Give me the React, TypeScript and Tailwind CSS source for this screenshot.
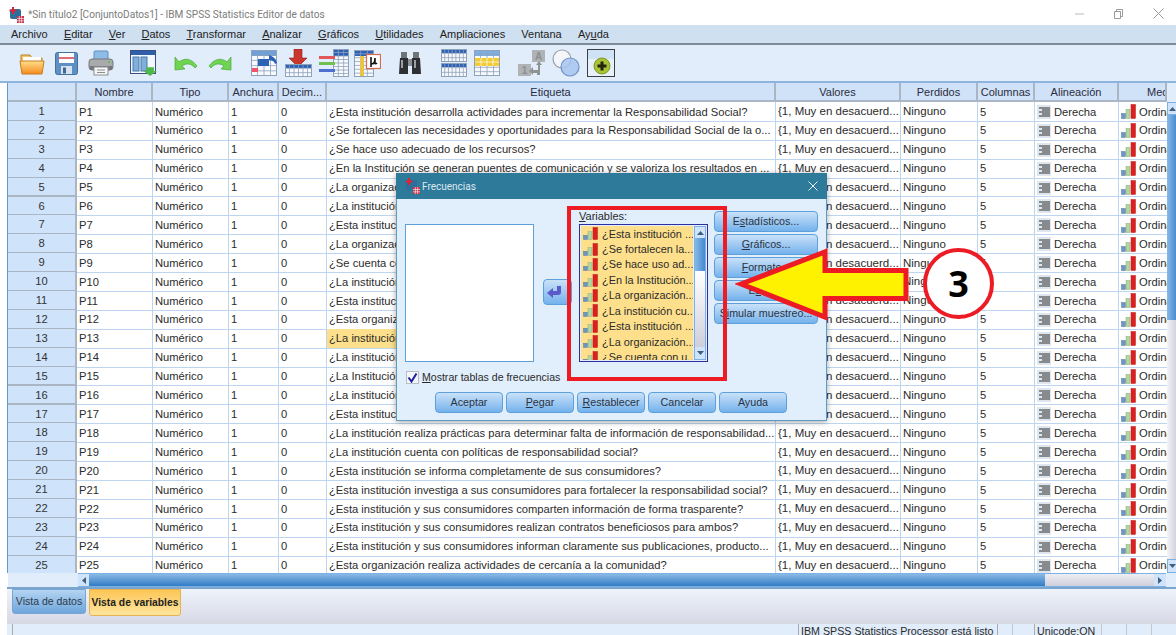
import React from 'react';

const labels = [
  '¿Esta institución desarrolla actividades para incrementar la Responsabilidad Social?',
  '¿Se fortalecen las necesidades y oportunidades para la Responsabilidad Social de la o...',
  '¿Se hace uso adecuado de los recursos?',
  '¿En la Institución se generan puentes de comunicación y se valoriza los resultados en ...',
  '¿La organización cumple con sus compromisos?',
  '¿La institución cuenta con programas sociales?',
  '¿Esta institución promueve la participación?',
  '¿La organización informa sobre sus acciones?',
  '¿Se cuenta con un código de ética?',
  '¿La institución evalúa sus resultados?',
  '¿Esta institución apoya a la comunidad?',
  '¿Esta organización capacita a su personal?',
  '¿La institución respeta a sus trabajadores?',
  '¿La institución protege el medio ambiente?',
  '¿La Institución fomenta el diálogo?',
  '¿La institución difunde sus políticas?',
  '¿Esta institución rinde cuentas?',
  '¿La institución realiza prácticas para determinar falta de información de responsabilidad...',
  '¿La institución cuenta con políticas de responsabilidad social?',
  '¿Esta institución se informa completamente de sus consumidores?',
  '¿Esta institución investiga a sus consumidores para fortalecer la responsabilidad social?',
  '¿Esta institución y sus consumidores comparten información de forma trasparente?',
  '¿Esta institución y sus consumidores realizan contratos beneficiosos para ambos?',
  '¿Esta institución y sus consumidores informan claramente sus publicaciones, producto...',
  '¿Esta organización realiza actividades de cercanía a la comunidad?',
];

const pickList = [
  '¿Esta institución ...',
  '¿Se fortalecen la...',
  '¿Se hace uso ad...',
  '¿En la Institución...',
  '¿La organización...',
  '¿La institución cu...',
  '¿Esta institución ...',
  '¿La organización...',
  '¿Se cuenta con u...',
];

const gridCols = 'grid grid-cols-[69px_76px_76px_50px_48px_449px_125px_77px_57px_84px_48px]';

const OrdinalIcon = ({ height = 15 }: { height?: number }) => (
  <svg width="15" height={height} viewBox="0 0 15 15" preserveAspectRatio="none" className="shrink-0">
    <rect x="0.5" y="9.5" width="4" height="5" fill="#6d96c8" stroke="#54779f" strokeWidth="0.5" />
    <rect x="5" y="5.5" width="4" height="9" fill="#b4d6a0" stroke="#86a874" strokeWidth="0.5" />
    <rect x="10" y="0.5" width="4.5" height="14" fill="#dc2020" stroke="#b81c1c" strokeWidth="0.5" />
  </svg>
);

const AlignIcon = () => (
  <svg width="14" height="14" viewBox="0 0 14 14" className="shrink-0">
    <rect width="14" height="14" fill="#dfe7ee" />
    <path d="M2 3h11M5 5h8M2 7h11M5 9h8M2 11h11" stroke="#2e2e2e" strokeWidth="1" />
  </svg>
);

const AppIcon = () => (
  <svg width="16" height="16" viewBox="0 0 16 16">
    <rect x="2" y="2" width="11" height="10" rx="2" fill="#2d6f9a" />
    <path d="M5 0v7M1.5 3.5h7" stroke="#d8263a" strokeWidth="2" />
    <rect x="9" y="9" width="7" height="7" fill="#c8324a" />
    <path d="M9 11.5h7M9 13.8h7M11.3 9v7M13.6 9v7" stroke="#fff" strokeWidth="0.6" />
  </svg>
);

const FolderIcon = () => (
  <svg width="26" height="26" viewBox="0 0 26 26" className="ml-[19px]">
    <defs>
      <linearGradient id="folderFill" x1="0" y1="0" x2="0" y2="1">
        <stop offset="0" stopColor="#ffe08a" />
        <stop offset="1" stopColor="#f58a1f" />
      </linearGradient>
    </defs>
    <path d="M2 5h9l2 3h10v5H2z" fill="#f7c766" stroke="#b9812a" />
    <rect x="4" y="7" width="18" height="5" fill="#fff" />
    <path d="M1 11h24l-2 13H3z" fill="url(#folderFill)" stroke="#cc7a1e" />
  </svg>
);

const SaveIcon = () => (
  <svg width="23" height="26" viewBox="0 0 23 26" className="ml-[10px]">
    <rect x="0.5" y="2.5" width="22" height="22" rx="2" fill="#5d8fc4" stroke="#44709e" />
    <rect x="4" y="3" width="15" height="10" fill="#fbfcfd" />
    <path d="M4 8h15" stroke="#d8465a" strokeWidth="1.6" />
    <rect x="6" y="16" width="11" height="8" fill="#d6e2ee" />
    <rect x="8" y="17.5" width="3" height="6" fill="#3f6896" />
  </svg>
);

const PrintIcon = () => (
  <svg width="26" height="26" viewBox="0 0 26 26" className="ml-[10px]">
    <rect x="6" y="1" width="14" height="10" rx="1" fill="#8fbce6" stroke="#5f8fbd" />
    <rect x="1" y="9" width="24" height="11" rx="3" fill="#a8aaac" stroke="#77797c" />
    <rect x="2" y="16" width="22" height="4" fill="#75777a" />
    <rect x="6" y="17" width="14" height="8" fill="#f6f6f6" stroke="#8b8d90" />
    <path d="M9 20h8M9 22.5h8" stroke="#8b8d90" />
    <rect x="20" y="11" width="2" height="2" fill="#6cc04a" />
  </svg>
);

const GotoIcon = () => (
  <svg width="28" height="27" viewBox="0 0 28 27" className="ml-[16px]">
    <rect x="0.5" y="0.5" width="25" height="23" fill="#f4f7fb" stroke="#3b4f85" />
    <rect x="1" y="1" width="24" height="4" fill="#2e5fa8" />
    <rect x="3" y="7" width="6" height="14" fill="#7fb0dc" stroke="#4878a8" />
    <rect x="11" y="7" width="6" height="14" fill="#7fb0dc" stroke="#4878a8" />
    <path d="M18 18h8v4h3l-7 5-7-5h3z" transform="translate(-1 0) scale(0.96)" fill="#4fb848" />
  </svg>
);

const UndoIcon = () => (
  <svg width="24" height="18" viewBox="0 0 24 18" className="ml-[16px]">
    <path d="M1 3v13l10-1-3-3c4-3 9-3 13 2l2-2C18 5 11 3 5 8z" fill="#6fd452" stroke="#4aa838" strokeWidth="0.7" />
  </svg>
);

const RedoIcon = () => (
  <svg width="24" height="18" viewBox="0 0 24 18" className="ml-[10px]">
    <path d="M23 3v13l-10-1 3-3c-4-3-9-3-13 2l-2-2C6 5 13 3 19 8z" fill="#6fd452" stroke="#4aa838" strokeWidth="0.7" />
  </svg>
);

const GridGlyph = ({ rows = 4, cols = 5, w = 26, h = 24, head = '#2b62b5' }: { rows?: number; cols?: number; w?: number; h?: number; head?: string }) => (
  <>
    <rect x="0.5" y="0.5" width={w - 1} height={h - 1} fill="#f7f9fc" stroke="#8ea2bc" />
    <rect x="1" y="1" width={w - 2} height={Math.round(h / 5)} fill={head} />
    {Array.from({ length: rows }, (_, i) => (
      <path key={`r${i}`} d={`M1 ${((i + 1) * h) / (rows + 1)}H${w - 1}`} stroke="#8ea2bc" strokeWidth="0.8" />
    ))}
    {Array.from({ length: cols - 1 }, (_, i) => (
      <path key={`c${i}`} d={`M${((i + 1) * w) / cols} 1V${h - 1}`} stroke="#8ea2bc" strokeWidth="0.8" />
    ))}
  </>
);

const RecallIcon = () => (
  <svg width="26" height="26" viewBox="0 0 26 26" className="ml-[19px]">
    <GridGlyph rows={4} cols={4} h={26} head="#6d9fd8" />
    <rect x="1" y="18" width="6" height="4" fill="#f0536a" />
    <path d="M7 9h11V5c3 1 7 3 8 8l-2 1c-1-3-3-4-6-4v6H7z" fill="#2b62b5" />
  </svg>
);

const InsertCasesIcon = () => (
  <svg width="27" height="28" viewBox="0 0 27 28" className="ml-[8px]">
    <path d="M9 0h8v9h5l-9 9-9-9h5z" fill="#c9362b" stroke="#96241c" strokeWidth="0.6" />
    <g transform="translate(0 15)">
      <GridGlyph rows={2} cols={6} w={27} h={13} head="#2b62b5" />
    </g>
  </svg>
);

const InsertVarIcon = () => (
  <svg width="30" height="28" viewBox="0 0 30 28" className="ml-[7px]">
    <g transform="translate(14 0)">
      <GridGlyph rows={7} cols={3} w={16} h={28} head="#2b62b5" />
    </g>
    <rect x="0" y="7" width="16" height="3" fill="#e2565c" />
    <rect x="0" y="13" width="16" height="3" fill="#6fc04f" />
    <rect x="0" y="20" width="16" height="3" fill="#4d6fd2" />
  </svg>
);

const SplitIcon = () => (
  <svg width="27" height="27" viewBox="0 0 27 27" className="ml-[5px]">
    <g>
      <GridGlyph rows={6} cols={3} w={20} h={27} head="#2b62b5" />
    </g>
    <rect x="6" y="6" width="4" height="20" fill="#e8c548" />
    <rect x="12.5" y="4.5" width="14" height="14" fill="#fff" stroke="#d9694f" strokeWidth="1.2" />
    <path d="M17 7v10M17 13c2 2 4 0 4-5v5c0 1 1 1 2 0" fill="none" stroke="#111" strokeWidth="1.6" />
  </svg>
);

const BinocularsIcon = () => (
  <svg width="24" height="24" viewBox="0 0 24 24" className="ml-[17px]">
    <rect x="3" y="1" width="6" height="6" fill="#6f7478" />
    <rect x="15" y="1" width="6" height="6" fill="#6f7478" />
    <path d="M2 7h8v16H1z" fill="#2d2f33" />
    <path d="M22 7h-8v16h9z" fill="#2d2f33" />
    <rect x="10" y="8" width="4" height="7" fill="#8b9096" />
    <rect x="3" y="9" width="2" height="8" fill="#9aa0a6" />
    <rect x="16" y="9" width="2" height="8" fill="#9aa0a6" />
  </svg>
);

const DoubleGridIcon = () => (
  <svg width="26" height="28" viewBox="0 0 26 28" className="ml-[19px]">
    <GridGlyph rows={2} cols={7} h={13} />
    <g transform="translate(0 14)">
      <GridGlyph rows={2} cols={7} h={14} />
    </g>
  </svg>
);

const YellowGridIcon = () => (
  <svg width="26" height="26" viewBox="0 0 26 26" className="ml-[7px]">
    <GridGlyph rows={5} cols={4} h={26} head="#7eaee4" />
    <rect x="1" y="8" width="24" height="8" fill="#f3cb32" />
    <path d="M7 8v8M13 8v8M19 8v8M1 12h24" stroke="#fff" strokeWidth="0.7" />
  </svg>
);

const ValueLabelIcon = () => (
  <svg width="28" height="28" viewBox="0 0 28 28" className="ml-[18px]">
    <rect x="14" y="1" width="13" height="12" fill="#b0b3b6" />
    <text x="20.5" y="11" textAnchor="middle" fontSize="10" fontWeight="700" fill="#8b8e91" fontFamily="Liberation Sans, sans-serif">A</text>
    <rect x="0" y="15" width="13" height="12" fill="#b0b3b6" />
    <text x="6.5" y="25" textAnchor="middle" fontSize="10" fontWeight="700" fill="#8b8e91" fontFamily="Liberation Sans, sans-serif">1</text>
    <path d="M15 21h5V16h-2l3-4 3 4h-2v10h-3v-2h-4v2l-4-4 4-4z" fill="#8f9396" />
  </svg>
);

const SetsIcon = () => (
  <svg width="28" height="28" viewBox="0 0 28 28" className="ml-[6px]">
    <circle cx="10" cy="10" r="9" fill="#f4f6f9" stroke="#9aa0a8" strokeWidth="1.2" />
    <circle cx="18" cy="18" r="9" fill="#a7c4ef" fillOpacity="0.85" stroke="#6f93c9" strokeWidth="1.2" />
  </svg>
);

const AddOnIcon = () => (
  <svg width="28" height="28" viewBox="0 0 28 28" className="ml-[7px]">
    <rect x="0.5" y="0.5" width="27" height="27" fill="#e8f1fa" stroke="#3c3f44" />
    <rect x="1" y="1" width="26" height="9" fill="#cfe2f6" />
    <circle cx="15" cy="17" r="8" fill="#a8c436" stroke="#7f9a26" />
    <path d="M15 12.5v9M10.5 17h9" stroke="#22260f" strokeWidth="3" />
  </svg>
);

const TitleBar = () => (
  <div className="h-[25px] flex items-center bg-white pl-[8px] pt-[5px]">
    <AppIcon />
    <span className="ml-[4px] text-[#7c7c7c] text-[10.1px] [font-family:'Roboto',sans-serif]">*Sin título2 [ConjuntoDatos1] - IBM SPSS Statistics Editor de datos</span>
    <div className="ml-auto flex items-center gap-[30px] pr-[12px] -mt-[3px]">
      <svg width="9" height="10" viewBox="0 0 9 10"><path d="M0 5h9" stroke="#b9b9b9" /></svg>
      <svg width="9" height="10" viewBox="0 0 9 10"><path d="M.5 2.5h6v7h-6zM2.5 2V.5h6v7H7" fill="none" stroke="#9a9a9a" /></svg>
      <svg width="11" height="11" viewBox="0 0 11 11"><path d="M.5.5l10 10M10.5.5l-10 10" stroke="#9a9a9a" /></svg>
    </div>
  </div>
);

const MenuBar = () => (
  <div className="h-[20px] pt-[1px] bg-[#cfe0f1] border-b-2 border-[#7f8c98] flex items-center pl-[11px] gap-[16.2px] text-[11px] text-[#222]">
    <span>Archivo</span>
    <span><u>E</u>ditar</span>
    <span><u>V</u>er</span>
    <span><u>D</u>atos</span>
    <span><u>T</u>ransformar</span>
    <span><u>A</u>nalizar</span>
    <span><u>G</u>ráficos</span>
    <span><u>U</u>tilidades</span>
    <span>Ampliaciones</span>
    <span>Ventana</span>
    <span>Ay<u>u</u>da</span>
  </div>
);

const Toolbar = () => (
  <div className="h-[38px] bg-[#e1edfb] border-b-2 border-[#8db4dc] flex items-center relative">
    <FolderIcon />
    <SaveIcon />
    <PrintIcon />
    <GotoIcon />
    <UndoIcon />
    <RedoIcon />
    <RecallIcon />
    <InsertCasesIcon />
    <InsertVarIcon />
    <SplitIcon />
    <BinocularsIcon />
    <DoubleGridIcon />
    <YellowGridIcon />
    <ValueLabelIcon />
    <SetsIcon />
    <AddOnIcon />
  </div>
);

const headerCell = 'h-[19px] pt-[1px] bg-[#cfe2f8] border-r-2 border-b-2 border-[#aab6c4] flex items-center justify-center text-[11px] text-[#2c2c40] overflow-hidden whitespace-nowrap';
const bodyCell = 'h-full pt-[1px] border-r border-b border-[#bdd5ee] flex items-center pl-[2px] overflow-hidden whitespace-nowrap';

const HeaderRow = () => (
  <div className={gridCols}>
    {['', 'Nombre', 'Tipo', 'Anchura', 'Decim...', 'Etiqueta', 'Valores', 'Perdidos', 'Columnas', 'Alineación'].map((h, i) => (
      <div key={i} className={headerCell}>{h}</div>
    ))}
    <div className={`${headerCell} justify-start pl-[28px] border-r-0`}>Medida</div>
  </div>
);

const VarRow = ({ n, label }: { n: number; label: string }) => (
  <div className={`${gridCols} h-[18.92px] text-[11.2px] text-[#2b2b2b]`}>
    <div className="h-full pt-[1px] bg-[#cfe3fb] border-r-2 border-b-2 border-[#aab6c4] flex items-center justify-center text-[#333]">{n}</div>
    <div className={bodyCell}>P{n}</div>
    <div className={bodyCell}>Numérico</div>
    <div className={bodyCell}>1</div>
    <div className={bodyCell}>0</div>
    <div className={`${bodyCell} ${n === 13 ? 'bg-[#fde08c]' : ''}`}>{label}</div>
    <div className={`${bodyCell} text-[11.5px]`}>{'{1, Muy en desacuerd...'}</div>
    <div className={`${bodyCell} text-[11.5px]`}>Ninguno</div>
    <div className={bodyCell}>5</div>
    <div className={`${bodyCell} gap-[3px]`}><AlignIcon />Derecha</div>
    <div className={`${bodyCell} gap-[3px] border-r-0`}><OrdinalIcon />Ordinal</div>
  </div>
);

const ArrowUp = () => (
  <svg width="7" height="4" viewBox="0 0 7 4"><path d="M3.5 0L7 4H0z" fill="#3f5f80" /></svg>
);

const ArrowDown = () => (
  <svg width="7" height="4" viewBox="0 0 7 4"><path d="M3.5 4L7 0H0z" fill="#3f5f80" /></svg>
);

const VerticalScroll = () => (
  <div className="w-[10px] shrink-0 flex flex-col">
    <div className="h-[19px] bg-[#e1edfb]" />
    <div className="h-[13px] flex items-center justify-center bg-[#cfe3fb] border border-[#7db1e3]"><ArrowUp /></div>
    <div className="h-[205px] bg-gradient-to-r from-[#8ab9e6] to-[#3f8ad0]" />
    <div className="h-[239px] bg-gradient-to-r from-[#f4f4f8] to-[#cfcfdc]" />
    <div className="h-[14px] flex items-center justify-center bg-[#cfe3fb] border border-[#7db1e3]"><ArrowDown /></div>
  </div>
);

const HorizontalScroll = () => (
  <div className="h-[14px] flex">
    <div className="w-[70px] bg-[#e1edfb]" />
    <div className="flex-1 flex border-y border-[#7db1e3]">
      <div className="w-[11px] bg-[#cfe3fb] flex items-center justify-center">
        <svg width="4" height="7" viewBox="0 0 4 7"><path d="M0 3.5L4 0v7z" fill="#3f5f80" /></svg>
      </div>
      <div className="w-[956px] bg-gradient-to-b from-[#8ab9e6] to-[#2f7cc4]" />
      <div className="flex-1 bg-gradient-to-b from-[#eeeef4] to-[#cfcfdc]" />
      <div className="w-[12px] bg-[#cfe3fb] flex items-center justify-center">
        <svg width="4" height="7" viewBox="0 0 4 7"><path d="M4 3.5L0 0v7z" fill="#3f5f80" /></svg>
      </div>
    </div>
    <div className="w-[10px] bg-[#e1edfb]" />
  </div>
);

const Tabs = () => (
  <div className="h-[35px] ml-[7px] bg-gradient-to-b from-[#edf3fb] to-[#d9d9e7] border-t-2 border-[#7aa5cf] flex items-start pl-[5px] gap-[3px] text-[10.3px]">
    <div className="w-[74px] h-[25px] rounded-b-[3px] bg-gradient-to-b from-[#b4d4f2] to-[#6ea6dc] border border-[#7aa5cf] flex items-center justify-center text-[#2d3a4a] whitespace-nowrap text-[10.5px]">Vista de datos</div>
    <div className="w-[92px] h-[27px] rounded-b-[3px] bg-gradient-to-b from-[#fcc654] to-[#fee49c] border border-[#e3b355] flex items-center justify-center font-bold text-[#222] whitespace-nowrap">Vista de variables</div>
  </div>
);

const StatusBar = () => (
  <div className="h-[13px] ml-[7px] bg-[#e1edfb] border-t-2 border-[#d8d8e2] flex text-[10.7px] text-[#2b2b2b] overflow-hidden">
    <div className="w-[787px] ml-[5px] border-l border-r border-[#a9a9b2]" />
    <div className="w-[199px] border-r border-[#a9a9b2] whitespace-nowrap pl-[2px] leading-[14px]">IBM SPSS Statistics Processor está listo</div>
    <div className="w-[15px] border-r border-[#c5c5cc]" />
    <div className="w-[22px] border-r border-[#a9a9b2]" />
    <div className="w-[67px] border-r border-[#c5c5cc] pl-[2px] leading-[14px] whitespace-nowrap">Unicode:ON</div>
    <div className="w-[25px] border-r border-[#c5c5cc]" />
    <div className="w-[25px] border-r border-[#c5c5cc]" />
  </div>
);

const blueBtn = 'rounded-[4px] border border-[#5ea0dc] bg-gradient-to-b from-[#c9e1f8] to-[#74b2ec] flex items-center justify-center text-[10.7px] text-[#2a3342] whitespace-nowrap';

const PickListPanel = () => (
  <div className="w-[129px] h-[138px] border border-[#2d2fa0] flex bg-[#e1eefb] p-[1px] overflow-hidden">
    <div className="w-[112px] bg-[#fee08c] flex flex-col pl-[2px] overflow-hidden">
      {pickList.map((item, i) => (
        <div key={i} className="h-[15.45px] shrink-0 flex items-center gap-[4px] text-[10.9px] text-[#2b2b2b] whitespace-nowrap">
          <OrdinalIcon height={13} />
          {item}
        </div>
      ))}
    </div>
    <div className="flex-1 ml-[1px] flex flex-col border border-[#7db1e3]">
      <div className="h-[11px] bg-[#cfe3fb] flex items-center justify-center"><ArrowUp /></div>
      <div className="h-[33px] bg-gradient-to-r from-[#8ab9e6] to-[#3f8ad0]" />
      <div className="flex-1 bg-gradient-to-b from-white to-[#cfcfdc]" />
      <div className="h-[12px] bg-[#cfe3fb] flex items-center justify-center"><ArrowDown /></div>
    </div>
  </div>
);

const FrequencyDialog = () => (
  <div className="absolute left-[396px] top-[173px] w-[431px] h-[248px] bg-[#e1eefb] border border-[#5d9cc0] shadow-[0_1px_6px_rgba(0,0,0,0.35)] flex flex-col">
    <div className="h-[26px] shrink-0 -mt-px -mx-px bg-[#2e7a9b] flex items-center pl-[8px] pr-[8px]">
      <AppIcon />
      <span className="ml-[2px] text-[10px] text-[#dce8ef] [font-family:'Roboto',sans-serif]">Frecuencias</span>
      <svg width="10" height="10" viewBox="0 0 10 10" className="ml-auto mr-[1px]"><path d="M.5.5l9 9M9.5.5l-9 9" stroke="#e8f0f4" /></svg>
    </div>
    <div className="flex pt-[12px] pl-[8px]">
      <div className="mt-[13px] w-[129px] h-[138px] bg-white border border-[#5ea0dc]" />
      <button className={`${blueBtn} ml-[9px] mt-[68px] w-[29px] h-[26px]`}>
        <svg width="14" height="12" viewBox="0 0 14 12" className="mr-[8px]"><path d="M0 7l6-5v3h4V0h4v6c0 2-1 3-3 3H6v3z" fill="#5a5ac8" /></svg>
      </button>
      <div className="ml-[7px]">
        <div className="h-[13px] text-[11px] leading-[10px] text-[#2b2b2b]"><u>V</u>ariables:</div>
        <PickListPanel />
      </div>
      <div className="ml-[6px] w-[104px] flex flex-col gap-[2px]">
        <button className={`${blueBtn} h-[21px]`}><span>E<u>s</u>tadísticos...</span></button>
        <button className={`${blueBtn} h-[21px]`}><span><u>G</u>ráficos...</span></button>
        <button className={`${blueBtn} h-[21px]`}><span><u>F</u>ormato...</span></button>
        <button className={`${blueBtn} h-[21px]`}><span>E<u>s</u>tilo...</span></button>
        <button className={`${blueBtn} h-[21px]`}><span>S<u>i</u>mular muestreo...</span></button>
      </div>
    </div>
    <div className="flex items-center mt-[9px] ml-[9px] text-[10.55px] leading-[13px] text-[#2b2b2b]">
      <div className="w-[13px] h-[13px] bg-[#f4f6fa] border border-[#b7bcc6] flex items-center justify-center">
        <svg width="11" height="11" viewBox="0 0 11 11"><path d="M1.5 5.5l3 4 5-8" fill="none" stroke="#1d1f9e" strokeWidth="2" /></svg>
      </div>
      <span className="ml-[3px]"><u>M</u>ostrar tablas de frecuencias</span>
    </div>
    <div className="flex ml-[38px] mt-[8px] gap-[3px]">
      <button className={`${blueBtn} w-[68px] h-[21px] border-[#2e4f72]`}>Aceptar</button>
      <button className={`${blueBtn} w-[68px] h-[21px]`}><span><u>P</u>egar</span></button>
      <button className={`${blueBtn} w-[68px] h-[21px]`}><span><u>R</u>establecer</span></button>
      <button className={`${blueBtn} w-[68px] h-[21px]`}>Cancelar</button>
      <button className={`${blueBtn} w-[68px] h-[21px]`}>Ayuda</button>
    </div>
  </div>
);

// Red callout frame, arrow and step number sitting over the dialog
const StepCallout = () => (
  <>
    <div className="absolute left-[567px] top-[206px] w-[160px] h-[175px] border-[4px] border-[#ed1c24]" />
    <svg width="180" height="80" viewBox="0 0 180 80" className="absolute left-[735px] top-[245px]">
      <path d="M6 39L90 7V25.5H171V53.5H90V72z" fill="#fff200" stroke="#ed1c24" strokeWidth="5" />
    </svg>
    <div className="absolute left-[923px] top-[248px] w-[71px] h-[71px] rounded-full bg-white border-[4px] border-[#ed1c24] flex items-center justify-center text-[36px] font-bold text-black [font-family:'Open_Sans',sans-serif]">3</div>
  </>
);

const App: React.FC = () => (
  <div className="relative w-[1176px] h-[635px] overflow-hidden bg-white [font-family:'Liberation_Sans',sans-serif]">
    <TitleBar />
    <MenuBar />
    <Toolbar />
    <div className="ml-[7px] border-l border-[#5f9bd2] flex">
      <div className="w-[1159px] shrink-0">
        <HeaderRow />
        <div className="h-[471px] overflow-hidden">
          {labels.map((label, i) => (
            <VarRow key={i} n={i + 1} label={label} />
          ))}
        </div>
      </div>
      <VerticalScroll />
    </div>
    <div className="ml-[8px]">
      <HorizontalScroll />
    </div>
    <Tabs />
    <StatusBar />
    <FrequencyDialog />
    <StepCallout />
  </div>
);

export default App;
